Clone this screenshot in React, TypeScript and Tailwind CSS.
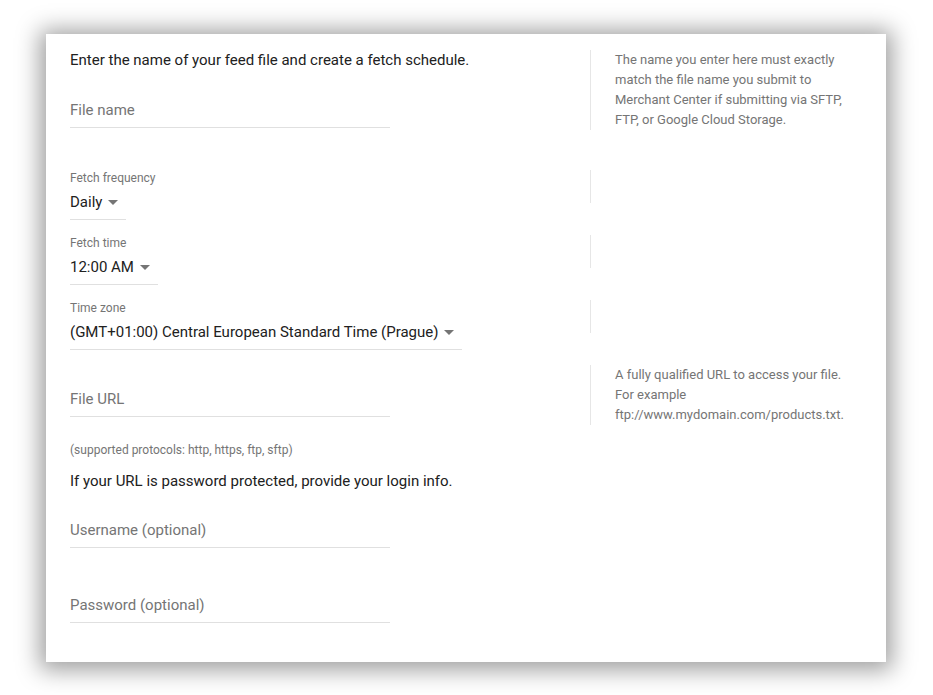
const font = { fontFamily: "Roboto, 'Noto Sans', sans-serif" };

function Arrow() {
  return (
    <svg width="10" height="5" viewBox="0 0 10 5" className="ml-[6px] shrink-0">
      <path d="M0 0h10L5 5z" fill="#757575" />
    </svg>
  );
}

function TextField({ label }: { label: string }) {
  return (
    <div className="w-[320px] border-b border-[#e0e0e0] pb-[7px] text-[15px] leading-5 text-[#757575]">
      {label}
    </div>
  );
}

function Select({ label, value, pr }: { label: string; value: string; pr: string }) {
  return (
    <div>
      <div className="text-[12px] leading-4 text-[#757575]">{label}</div>
      <div
        className={`mt-[6px] inline-flex items-center border-b border-[#e0e0e0] pb-[7px] text-[15px] leading-5 text-[#212121] ${pr}`}
      >
        {value}
        <Arrow />
      </div>
    </div>
  );
}

function Divider({ h }: { h: string }) {
  return <div className={`w-px shrink-0 bg-[#e6e6e6] ${h}`} />;
}

export default function App() {
  return (
    <div className="min-h-[695px] w-[933px] bg-white pt-[34px]" style={font}>
      <div className="ml-[46px] h-[628px] w-[840px] bg-white pl-[24px] pt-[16px] shadow-[0_2px_22px_6px_rgba(0,0,0,0.38)]">
        {/* feed name */}
        <div className="flex">
          <div className="w-[520px] shrink-0">
            <p className="text-[15px] leading-5 text-[#212121]">
              Enter the name of your feed file and create a fetch schedule.
            </p>
            <div className="mt-[30px]">
              <TextField label="File name" />
            </div>
          </div>
          <Divider h="h-[80px]" />
          <p className="w-[272px] pl-[24px] text-[13px] leading-5 text-[#757575]">
            The name you enter here must exactly match the file name you submit to
            Merchant Center if submitting via SFTP, FTP, or Google Cloud Storage.
          </p>
        </div>

        {/* schedule */}
        <div className="mt-[40px] flex">
          <div className="w-[520px] shrink-0">
            <Select label="Fetch frequency" value="Daily" pr="pr-[8px]" />
          </div>
          <Divider h="h-[33px]" />
        </div>
        <div className="mt-[15px] flex">
          <div className="w-[520px] shrink-0">
            <Select label="Fetch time" value="12:00 AM" pr="pr-[8px]" />
          </div>
          <Divider h="h-[33px]" />
        </div>
        <div className="mt-[15px] flex">
          <div className="w-[520px] shrink-0">
            <Select
              label="Time zone"
              value="(GMT+01:00) Central European Standard Time (Prague)"
              pr="pr-[8px]"
            />
          </div>
          <Divider h="h-[33px]" />
        </div>

        {/* file url */}
        <div className="mt-[15px] flex">
          <div className="w-[520px] shrink-0 pt-[24px]">
            <TextField label="File URL" />
          </div>
          <Divider h="h-[60px]" />
          <p className="w-[272px] pl-[24px] text-[13px] leading-5 text-[#757575]">
            A fully qualified URL to access your file.
            <br />
            For example
            <br />
            ftp://www.mydomain.com/products.txt.
          </p>
        </div>

        <p className="mt-[17px] text-[12px] leading-4 text-[#757575]">
          (supported protocols: http, https, ftp, sftp)
        </p>
        <p className="mt-[13px] text-[15px] leading-5 text-[#212121]">
          If your URL is password protected, provide your login info.
        </p>
        <div className="mt-[29px]">
          <TextField label="Username (optional)" />
        </div>
        <div className="mt-[47px]">
          <TextField label="Password (optional)" />
        </div>
      </div>
    </div>
  );
}
